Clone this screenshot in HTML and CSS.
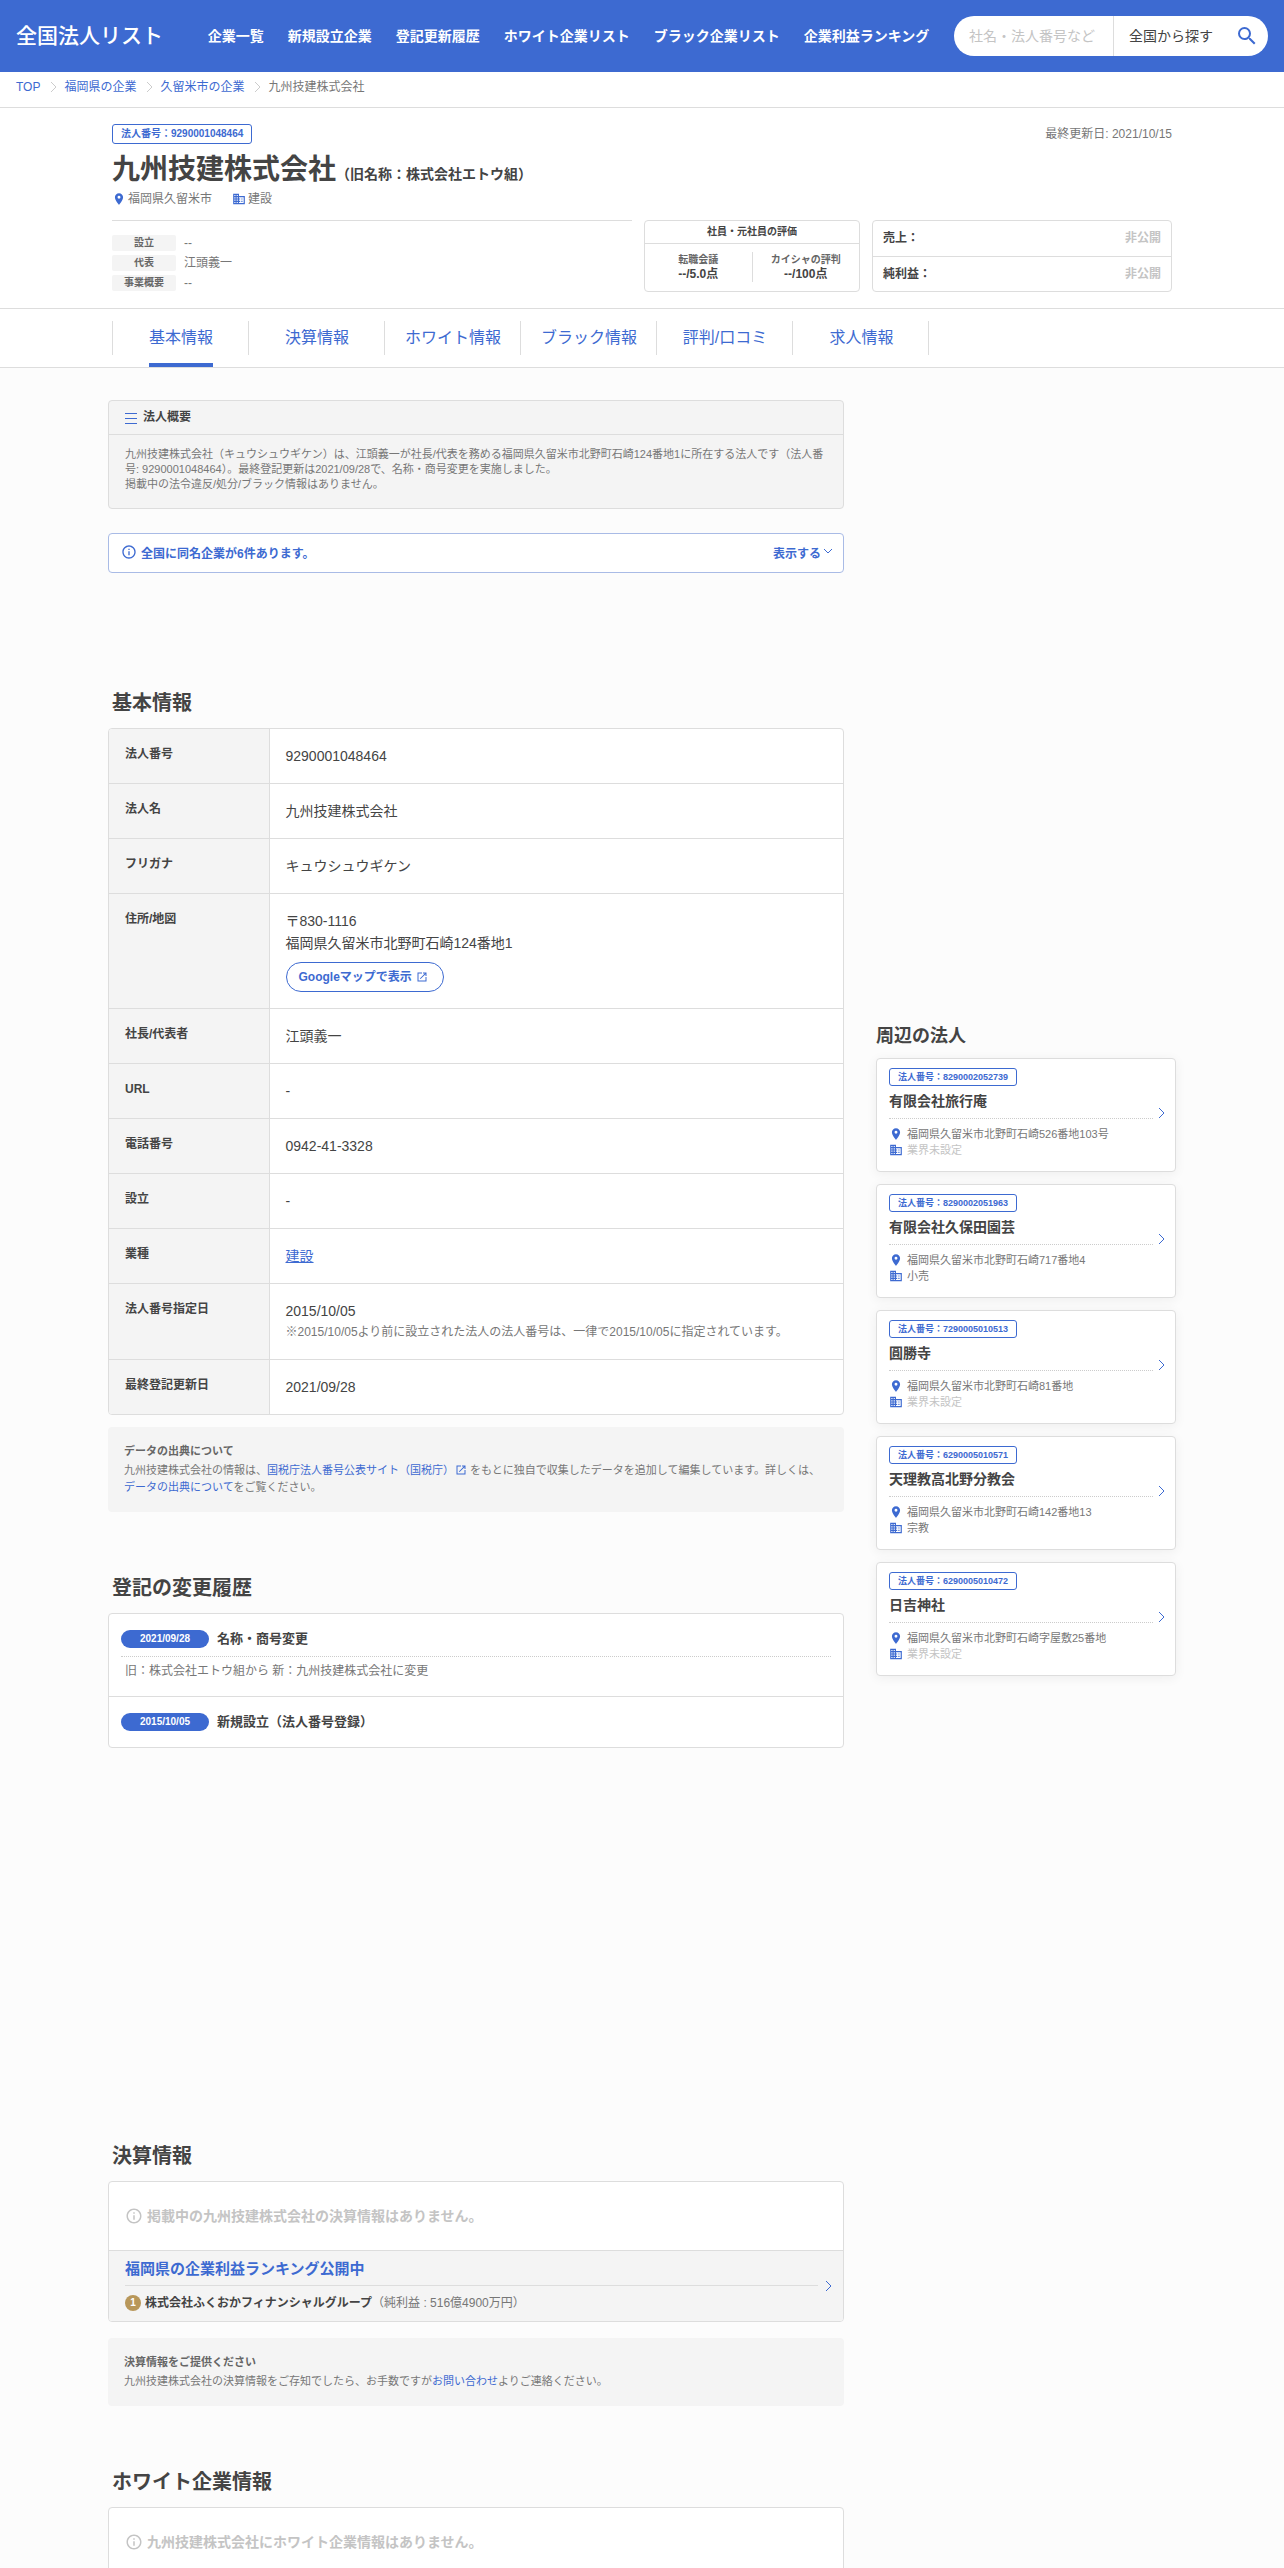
FILE: index.html
```html
<!DOCTYPE html>
<html lang="ja">
<head>
  <meta charset="UTF-8">
  <meta name="viewport" content="width=device-width, initial-scale=1.0">
  <title>九州技建株式会社 | 全国法人リスト</title>
  <link rel="stylesheet" href="styles.css">
</head>
<body>

  <!-- icons -->
  <svg class="sprite" aria-hidden="true">
    <symbol id="i-pin" viewBox="0 0 24 24"><path d="M12 2C8.13 2 5 5.13 5 9c0 5.25 7 13 7 13s7-7.75 7-13c0-3.87-3.13-7-7-7zm0 9.500a2.500 2.500 0 1 1 0-5 2.500 2.500 0 0 1 0 5z"/></symbol>
    <symbol id="i-building" viewBox="0 0 24 24"><path d="M12 7V3H2v18h20V7H12zM6 19H4v-2h2v2zm0-4H4v-2h2v2zm0-4H4V9h2v2zm0-4H4V5h2v2zm4 12H8v-2h2v2zm0-4H8v-2h2v2zm0-4H8V9h2v2zm0-4H8V5h2v2zm10 12h-8v-2h2v-2h-2v-2h2v-2h-2V9h8v10zm-2-8h-2v2h2v-2zm0 4h-2v2h2v-2z"/></symbol>
    <symbol id="i-search" viewBox="0 0 24 24"><path d="M15.500 14h-.79l-.28-.27A6.470 6.470 0 0 0 16 9.500 6.500 6.500 0 1 0 9.500 16c1.610 0 3.090-.59 4.230-1.570l.27.28v.79l5 4.990L20.490 19l-4.990-5zm-6 0C7.010 14 5 11.990 5 9.500S7.010 5 9.500 5 14 7.010 14 9.500 11.990 14 9.500 14z"/></symbol>
    <symbol id="i-info" viewBox="0 0 24 24"><path d="M11 7h2v2h-2zm0 4h2v6h-2zm1-9C6.480 2 2 6.480 2 12s4.480 10 10 10 10-4.480 10-10S17.520 2 12 2zm0 18c-4.410 0-8-3.590-8-8s3.590-8 8-8 8 3.590 8 8-3.590 8-8 8z"/></symbol>
    <symbol id="i-open" viewBox="0 0 24 24"><path d="M19 19H5V5h7V3H3v18h18v-9h-2v7zM14 3v2h3.590l-9.830 9.830 1.410 1.410L19 6.410V10h2V3h-7z"/></symbol>
    <symbol id="i-menu" viewBox="0 0 12 12"><path d="M0 1h12v1H0zM0 6h12v1H0zM0 11h12v1H0z"/></symbol>
    <symbol id="i-right" viewBox="0 0 8 12"><path d="M1 1l5 5-5 5" fill="none" stroke="currentColor"/></symbol>
    <symbol id="i-down" viewBox="0 0 10 6"><path d="M1 1l4 4 4-4" fill="none" stroke="currentColor"/></symbol>
  </svg>

  <header class="header">
    <a class="logo" href="#">全国法人リスト</a>
    <nav class="gnav">
      <a href="#">企業一覧</a>
      <a href="#">新規設立企業</a>
      <a href="#">登記更新履歴</a>
      <a href="#">ホワイト企業リスト</a>
      <a href="#">ブラック企業リスト</a>
      <a href="#">企業利益ランキング</a>
    </nav>
    <form class="search">
      <input type="text" placeholder="社名・法人番号など" aria-label="社名・法人番号など">
      <select aria-label="地域">
        <option>全国から探す</option>
      </select>
      <button type="submit" aria-label="検索"><svg><use href="#i-search"/></svg></button>
    </form>
  </header>

  <nav class="crumbs">
    <a href="#">TOP</a>
    <svg><use href="#i-right"/></svg>
    <a href="#">福岡県の企業</a>
    <svg><use href="#i-right"/></svg>
    <a href="#">久留米市の企業</a>
    <svg><use href="#i-right"/></svg>
    <span>九州技建株式会社</span>
  </nav>

  <section class="company">
    <div class="inner">
      <div class="company-top">
        <span class="badge">法人番号：9290001048464</span>
        <span class="updated">最終更新日: 2021/10/15</span>
      </div>
      <h1>九州技建株式会社<small>（旧名称：株式会社エトウ組）</small></h1>
      <div class="meta">
        <span><svg><use href="#i-pin"/></svg>福岡県久留米市</span>
        <span><svg><use href="#i-building"/></svg>建設</span>
      </div>
      <div class="summary">
        <dl class="facts">
          <div><dt>設立</dt><dd>--</dd></div>
          <div><dt>代表</dt><dd>江頭義一</dd></div>
          <div><dt>事業概要</dt><dd>--</dd></div>
        </dl>
        <div class="rating">
          <p class="rating-title">社員・元社員の評価</p>
          <div class="rating-body">
            <div><span>転職会議</span><b>--/5.0点</b></div>
            <div><span>カイシャの評判</span><b>--/100点</b></div>
          </div>
        </div>
        <dl class="money">
          <div><dt>売上：</dt><dd>非公開</dd></div>
          <div><dt>純利益：</dt><dd>非公開</dd></div>
        </dl>
      </div>
    </div>
  </section>

  <nav class="tabs">
    <div class="inner">
      <a class="active" href="#basic"><span>基本情報</span></a>
      <a href="#finance"><span>決算情報</span></a>
      <a href="#white"><span>ホワイト情報</span></a>
      <a href="#"><span>ブラック情報</span></a>
      <a href="#"><span>評判/口コミ</span></a>
      <a href="#"><span>求人情報</span></a>
    </div>
  </nav>

  <div class="wrap">
    <main class="main">

      <section class="overview">
        <h2><svg><use href="#i-menu"/></svg>法人概要</h2>
        <p>九州技建株式会社（キュウシュウギケン）は、江頭義一が社長/代表を務める福岡県久留米市北野町石崎124番地1に所在する法人です（法人番号: 9290001048464）。最終登記更新は2021/09/28で、名称・商号変更を実施しました。<br>掲載中の法令違反/処分/ブラック情報はありません。</p>
      </section>

      <button class="same-name" type="button">
        <svg class="info"><use href="#i-info"/></svg>
        <span>全国に同名企業が6件あります。</span>
        <span class="toggle">表示する<svg><use href="#i-down"/></svg></span>
      </button>

      <div class="ad ad-top"></div>

      <section id="basic">
        <h2 class="heading">基本情報</h2>
        <div class="panel">
          <table class="info-table">
            <tr><th scope="row">法人番号</th><td>9290001048464</td></tr>
            <tr><th scope="row">法人名</th><td>九州技建株式会社</td></tr>
            <tr><th scope="row">フリガナ</th><td>キュウシュウギケン</td></tr>
            <tr>
              <th scope="row">住所/地図</th>
              <td>〒830-1116<br>福岡県久留米市北野町石崎124番地1
                <a class="map-link" href="#">Googleマップで表示<svg><use href="#i-open"/></svg></a>
              </td>
            </tr>
            <tr><th scope="row">社長/代表者</th><td>江頭義一</td></tr>
            <tr><th scope="row">URL</th><td>-</td></tr>
            <tr><th scope="row">電話番号</th><td>0942-41-3328</td></tr>
            <tr><th scope="row">設立</th><td>-</td></tr>
            <tr><th scope="row">業種</th><td><a class="underline" href="#">建設</a></td></tr>
            <tr>
              <th scope="row">法人番号指定日</th>
              <td>2015/10/05<p class="td-note">※2015/10/05より前に設立された法人の法人番号は、一律で2015/10/05に指定されています。</p></td>
            </tr>
            <tr><th scope="row">最終登記更新日</th><td>2021/09/28</td></tr>
          </table>
        </div>
        <div class="note">
          <h3>データの出典について</h3>
          <p>九州技建株式会社の情報は、<a href="#">国税庁法人番号公表サイト（国税庁）<svg><use href="#i-open"/></svg></a> をもとに独自で収集したデータを追加して編集しています。詳しくは、<a href="#">データの出典について</a>をご覧ください。</p>
        </div>
      </section>

      <section class="history">
        <h2 class="heading">登記の変更履歴</h2>
        <ul class="panel">
          <li>
            <div class="history-head"><time>2021/09/28</time><h3>名称・商号変更</h3></div>
            <p>旧：株式会社エトウ組から 新：九州技建株式会社に変更</p>
          </li>
          <li>
            <div class="history-head"><time>2015/10/05</time><h3>新規設立（法人番号登録）</h3></div>
          </li>
        </ul>
      </section>

      <div class="ad ad-middle"></div>

      <section id="finance">
        <h2 class="heading">決算情報</h2>
        <div class="panel">
          <p class="empty"><svg><use href="#i-info"/></svg>掲載中の九州技建株式会社の決算情報はありません。</p>
          <a class="ranking" href="#">
            <div class="ranking-body">
              <h3>福岡県の企業利益ランキング公開中</h3>
              <p><span class="rank">1</span><b>株式会社ふくおかフィナンシャルグループ</b>（純利益 : 516億4900万円）</p>
            </div>
            <svg><use href="#i-right"/></svg>
          </a>
        </div>
        <div class="note note-finance">
          <h3>決算情報をご提供ください</h3>
          <p>九州技建株式会社の決算情報をご存知でしたら、お手数ですが<a href="#">お問い合わせ</a>よりご連絡ください。</p>
        </div>
      </section>

      <section id="white" class="white">
        <h2 class="heading">ホワイト企業情報</h2>
        <div class="panel">
          <p class="empty"><svg><use href="#i-info"/></svg>九州技建株式会社にホワイト企業情報はありません。</p>
        </div>
      </section>

    </main>

    <aside class="side">
      <div class="ad ad-side"></div>
      <h2>周辺の法人</h2>
      <a class="card" href="#">
        <div class="card-body">
          <span class="badge">法人番号：8290002052739</span>
          <h3>有限会社旅行庵</h3>
          <p><svg><use href="#i-pin"/></svg>福岡県久留米市北野町石崎526番地103号</p>
          <p class="unset"><svg><use href="#i-building"/></svg>業界未設定</p>
        </div>
        <svg class="arrow"><use href="#i-right"/></svg>
      </a>
      <a class="card" href="#">
        <div class="card-body">
          <span class="badge">法人番号：8290002051963</span>
          <h3>有限会社久保田園芸</h3>
          <p><svg><use href="#i-pin"/></svg>福岡県久留米市北野町石崎717番地4</p>
          <p><svg><use href="#i-building"/></svg>小売</p>
        </div>
        <svg class="arrow"><use href="#i-right"/></svg>
      </a>
      <a class="card" href="#">
        <div class="card-body">
          <span class="badge">法人番号：7290005010513</span>
          <h3>圓勝寺</h3>
          <p><svg><use href="#i-pin"/></svg>福岡県久留米市北野町石崎81番地</p>
          <p class="unset"><svg><use href="#i-building"/></svg>業界未設定</p>
        </div>
        <svg class="arrow"><use href="#i-right"/></svg>
      </a>
      <a class="card" href="#">
        <div class="card-body">
          <span class="badge">法人番号：6290005010571</span>
          <h3>天理教高北野分教会</h3>
          <p><svg><use href="#i-pin"/></svg>福岡県久留米市北野町石崎142番地13</p>
          <p><svg><use href="#i-building"/></svg>宗教</p>
        </div>
        <svg class="arrow"><use href="#i-right"/></svg>
      </a>
      <a class="card" href="#">
        <div class="card-body">
          <span class="badge">法人番号：6290005010472</span>
          <h3>日吉神社</h3>
          <p><svg><use href="#i-pin"/></svg>福岡県久留米市北野町石崎字屋敷25番地</p>
          <p class="unset"><svg><use href="#i-building"/></svg>業界未設定</p>
        </div>
        <svg class="arrow"><use href="#i-right"/></svg>
      </a>
    </aside>
  </div>

</body>
</html>
```
FILE: styles.css
```css
*{box-sizing:border-box;margin:0;padding:0}
body{
  font-family:"Liberation Sans","Noto Sans CJK JP",sans-serif;
  font-size:12px;line-height:18px;color:#444;background:#fcfcfc;
}
a{color:#3d6ad1;text-decoration:none}
ul{list-style:none}
svg{fill:currentColor;flex:none}
.sprite{display:none}
.inner{max-width:1060px;margin:0 auto}

/* header */
.header{
  display:flex;align-items:center;justify-content:space-between;
  height:72px;padding:0 16px;background:#3d6ad1;
}
.logo{font-size:21px;font-weight:500;line-height:24px;color:#fff;white-space:nowrap}
.gnav{display:flex;gap:24px;margin-left:20px}
.gnav a{color:#fff;font-size:14px;font-weight:bold;white-space:nowrap}
.search{
  display:flex;align-items:center;width:314px;height:40px;
  background:#fff;border-radius:20px;overflow:hidden;
}
.search input,.search select,.search button{
  height:40px;border:0;background:none;font-family:inherit;font-size:14px;
}
.search input{flex:1;min-width:0;padding:0 8px 0 15px;color:#444}
.search input::placeholder{color:#c4c4c4}
.search select{appearance:none;width:113px;padding-left:15px;border-left:1px solid #ddd;color:#444}
.search button{display:flex;align-items:center;justify-content:center;width:42px;color:#3d6ad1}
.search button svg{width:24px;height:24px}

/* breadcrumb */
.crumbs{
  display:flex;align-items:center;height:36px;padding:0 16px 6px;
  background:#fff;border-bottom:1px solid #ddd;color:#777;
}
.crumbs svg{width:8px;height:14px;margin:0 6px 0 10px;color:#ccc}

/* company head */
.company{background:#fff;border-bottom:1px solid #ddd;padding:16px 0}
.company-top{display:flex;justify-content:space-between;align-items:center}
.badge{
  display:inline-block;padding:0 8px;border:1px solid #3d6ad1;border-radius:3px;
  font-size:10px;font-weight:bold;line-height:18px;color:#3d6ad1;background:#fff;
}
.updated{color:#777}
h1{margin-top:8px;font-size:28px;line-height:36px}
h1 small{font-size:14px;line-height:14px}
.meta{display:flex;gap:20px;margin-top:2px;color:#777}
.meta span{display:flex;align-items:center}
.meta svg{width:14px;height:14px;margin-right:2px;color:#3d6ad1}
.summary{display:flex;gap:12px;margin-top:12px}
.facts{
  flex:1;display:flex;flex-direction:column;gap:4px;
  padding-top:14px;border-top:1px solid #ddd;
}
.facts div{display:flex;gap:8px;line-height:16px}
.facts dt{
  width:64px;background:#f4f4f4;border-radius:2px;
  font-size:10px;font-weight:bold;text-align:center;color:#666;
}
.facts dd{color:#777}
.rating{width:216px;border:1px solid #ddd;border-radius:4px;text-align:center}
.rating-title{font-size:10px;font-weight:bold;line-height:22px;border-bottom:1px solid #ddd}
.rating-body{display:flex;padding:8px 0}
.rating-body div{flex:1;display:flex;flex-direction:column;line-height:15px}
.rating-body div + div{border-left:1px solid #ddd}
.rating-body span{font-size:10px;font-weight:bold;color:#666}
.money{width:300px;border:1px solid #ddd;border-radius:4px;font-weight:bold}
.money div{display:flex;justify-content:space-between;padding:0 10px;line-height:35px}
.money div + div{border-top:1px solid #ddd;line-height:34px}
.money dd{color:#c4c4c4}

/* tabs */
.tabs{background:#fff;border-bottom:1px solid #ddd}
.tabs .inner{display:flex}
.tabs a{
  display:flex;justify-content:center;width:136px;height:58px;padding-left:2px;font-size:16px;line-height:58px;
  background:linear-gradient(#ddd,#ddd) no-repeat 0 12px/1px 34px;
}
.tabs a:last-child{
  width:137px;
  background:linear-gradient(#ddd,#ddd) no-repeat 0 12px/1px 34px,linear-gradient(#ddd,#ddd) no-repeat 100% 12px/1px 34px;
}
.tabs .active span{border-bottom:4px solid #3d6ad1}

/* columns */
.wrap{display:flex;gap:32px;align-items:flex-start;max-width:1068px;margin:0 auto;padding-top:32px}
.main{flex:1;min-width:0}
.side{width:300px}

.overview{background:#f4f4f4;border:1px solid #ddd;border-radius:4px}
.overview h2{
  display:flex;align-items:center;gap:6px;padding:0 16px;
  font-size:12px;line-height:33px;border-bottom:1px solid #ddd;
}
.overview h2 svg{width:12px;height:12px;color:#3d6ad1}
.overview p{padding:12px 16px 16px;font-size:11px;line-height:15px;color:#777}

.same-name{
  display:flex;align-items:center;width:100%;height:40px;margin-top:24px;padding:0 10px 2px 12px;
  background:#fff;border:1px solid #a9bbe6;border-radius:4px;
  font-family:inherit;font-size:12px;font-weight:bold;color:#3d6ad1;
}
.same-name .info{width:16px;height:16px;margin-right:4px}
.toggle{display:flex;margin-left:auto}
.toggle svg{width:10px;height:6px;margin:4px 0 0 2px}

/* ad slots */
.ad-top{height:115px}
.ad-middle{height:393px}
.ad-side{height:622px}

.heading{padding:0 4px;margin-bottom:10px;font-size:20px;line-height:30px}
.panel{background:#fff;border:1px solid #ddd;border-radius:4px;overflow:hidden}

/* basic info */
.info-table{width:100%;border-collapse:collapse}
.info-table tr + tr{border-top:1px solid #ddd}
.info-table th{
  width:160px;padding:16px;background:#f4f4f4;border-right:1px solid #ddd;
  text-align:left;vertical-align:top;
}
.info-table td{padding:16px;font-size:14px;line-height:22px;vertical-align:top}
.map-link{
  display:flex;align-items:center;width:158px;height:30px;margin-top:8px;padding:0 12px;
  border:1px solid #3d6ad1;border-radius:15px;font-size:12px;font-weight:bold;
}
.map-link svg{width:12px;height:12px;margin-left:4px}
.underline{text-decoration:underline}
.td-note{font-size:12px;line-height:21px;color:#777}

.note{
  margin-top:12px;padding:16px;background:#f4f4f4;border-radius:4px;
  font-size:11px;line-height:17px;color:#777;
}
.note h3{margin-bottom:2px;font-size:11px;color:#666}
.note svg{width:12px;height:12px;margin-left:1px;vertical-align:-2px}
.note-finance{margin-top:16px}

/* history */
.history{margin-top:61px}
.history li{padding:16px 12px}
.history li + li{border-top:1px solid #ddd}
.history-head{display:flex;align-items:center;gap:8px}
.history time{
  width:88px;background:#3d6ad1;border-radius:9px;
  font-size:10px;font-weight:bold;text-align:center;color:#fff;
}
.history h3{font-size:13px}
.history p{margin-top:8px;padding:5px 4px 0;border-top:1px dotted #ccc;color:#777}

/* finance */
.empty{
  display:flex;align-items:center;gap:4px;padding:24px 16px;
  font-size:14px;font-weight:bold;line-height:20px;color:#c4c4c4;
}
.empty svg{width:18px;height:18px}
.ranking{
  display:flex;align-items:center;gap:7px;padding:6px 10px 7px 16px;
  background:#f4f4f4;border-top:1px solid #ddd;
}
.ranking-body{flex:1}
.ranking h3{padding:0 0 4px;border-bottom:1px solid #ddd;font-size:15px;line-height:24px}
.ranking p{display:flex;align-items:center;padding-top:6px;line-height:22px;color:#777}
.ranking b{color:#444}
.ranking svg{width:8px;height:14px}
.rank{
  width:16px;margin-right:4px;background:#b8975a;border-radius:8px;
  font-size:10px;font-weight:bold;line-height:16px;text-align:center;color:#fff;
}
.white{margin-top:61px}

/* side */
.side h2{margin-bottom:8px;font-size:18px;line-height:28px}
.card{
  display:flex;align-items:center;gap:5px;padding:9px 9px 13px 12px;margin-bottom:12px;
  background:#fff;border:1px solid #ddd;border-radius:4px;
  box-shadow:0 2px 12px rgba(0,0,0,.06);color:#777;
}
.card-body{flex:1}
.card .badge{display:block;width:128px;padding:0;text-align:center;font-size:9px;line-height:16px}
.card h3{
  margin:5px 0 7px;padding-bottom:7px;border-bottom:1px dotted #ccc;
  font-size:14px;line-height:20px;color:#444;
}
.card p{display:flex;align-items:center;gap:4px;font-size:11px;line-height:16px}
.card p svg{width:14px;height:14px;color:#3d6ad1}
.card .unset{color:#c4c4c4}
.card .unset svg{color:#3d6ad1}
.card .arrow{width:8px;height:12px;color:#3d6ad1}
```
